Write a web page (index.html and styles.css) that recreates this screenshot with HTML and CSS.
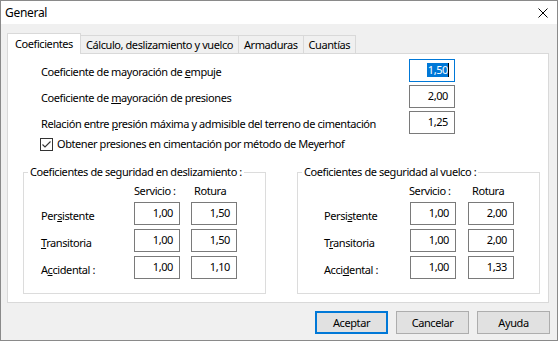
FILE: index.html
```html
<!DOCTYPE html>
<html>
<head>
<meta charset="utf-8">
<link rel="stylesheet" href="styles.css">
</head>
<body>
<div class="window">
  <div class="titlebar">
    <span class="title">General</span>
    <svg class="close" width="10" height="10" viewBox="0 0 10 10"><path d="M0.5 0.5 L9.5 9.5 M9.5 0.5 L0.5 9.5" stroke="#000" stroke-width="1" fill="none"/></svg>
  </div>
  <div class="client">
    <div class="tabs">
      <div class="tab active">Coeficientes</div>
      <div class="tab">Cálculo, deslizamiento y vuelco</div>
      <div class="tab">Armaduras</div>
      <div class="tab">Cuantías</div>
    </div>
    <div class="panel">
      <div class="row">
        <span class="rlabel">Coeficiente de mayoración de <u>e</u>mpuje</span>
        <div class="field focus"><span class="sel">1,50</span><span class="caret"></span></div>
      </div>
      <div class="row">
        <span class="rlabel">Coeficiente de <u>m</u>ayoración de presiones</span>
        <div class="field">2,00</div>
      </div>
      <div class="row">
        <span class="rlabel">Relación entre <u>p</u>resión máxima y admisible del terreno de cimentación</span>
        <div class="field">1,25</div>
      </div>
      <div class="check">
        <svg class="box" width="13" height="13" viewBox="0 0 13 13"><rect x="0.5" y="0.5" width="12" height="12" fill="#fff" stroke="#333"/><path d="M2.5 6.5 L5 9 L10.5 3.5" stroke="#333" stroke-width="1.1" fill="none"/></svg>
        <span>Obtener presiones en cimentación por método de Meyerhof</span>
      </div>
      <div class="groups">
        <fieldset class="group left">
          <legend>Coeficientes de seguridad en deslizamiento :</legend>
          <div class="grid">
            <span></span><span class="hd">Servicio :</span><span class="hd hd2">Rotura</span>
            <span class="glabel">Per<u>s</u>istente</span><div class="field">1,00</div><div class="field">1,50</div>
            <span class="glabel"><u>T</u>ransitoria</span><div class="field">1,00</div><div class="field">1,50</div>
            <span class="glabel">A<u>c</u>cidental :</span><div class="field">1,00</div><div class="field">1,10</div>
          </div>
        </fieldset>
        <fieldset class="group right">
          <legend>Coeficientes de seguridad al vuelco :</legend>
          <div class="grid">
            <span></span><span class="hd">Servicio :</span><span class="hd hd2">Rotura</span>
            <span class="glabel">Persi<u>s</u>tente</span><div class="field">1,00</div><div class="field">2,00</div>
            <span class="glabel">T<u>r</u>ansitoria</span><div class="field">1,00</div><div class="field">2,00</div>
            <span class="glabel">Acci<u>d</u>ental :</span><div class="field">1,00</div><div class="field">1,33</div>
          </div>
        </fieldset>
      </div>
    </div>
    <div class="footer">
      <div class="btn default">Aceptar</div>
      <div class="btn">Cancelar</div>
      <div class="btn">Ayuda</div>
    </div>
  </div>
</div>
</body>
</html>
```
FILE: styles.css
```css
* { box-sizing: border-box; }
html, body { margin: 0; padding: 0; background: #f0f0f0; }
.window {
  width: 558px; height: 341px;
  border: 1px solid #8a8a8a;
  display: flex; flex-direction: column;
  font-family: "Noto Sans", "Open Sans", sans-serif;
  font-size: 11px; color: #000;
  letter-spacing: -0.42px;
  line-height: 14px;
}
.titlebar {
  height: 23px; background: #fff;
  display: flex; align-items: center; justify-content: space-between;
  padding: 0 9px 0 4px;
  font-size: 12px; letter-spacing: -0.3px;
}
.close { display: block; }
.client {
  flex: 1; background: #f0f0f0;
  padding: 9px 8px 0 6px;
  display: flex; flex-direction: column;
}
.tabs { display: flex; align-items: flex-end; height: 20px; position: relative; z-index: 2; }
.tab {
  height: 18px; padding: 0 5px;
  border: 1px solid #d9d9d9; border-bottom: none;
  background: #f0f0f0;
  display: flex; align-items: center;
  margin-left: -1px;
}
.tab:first-child { margin-left: 0; }
.tab.active { height: 21px; margin-bottom: -1px; background: #fff; padding: 0 7px; }
.panel {
  width: 542px; height: 250px;
  background: #fff; border: 1px solid #d9d9d9;
  padding: 5px 0 0 33px;
  position: relative; z-index: 1;
}
.row { display: flex; align-items: center; height: 23px; margin-bottom: 3px; }
.rlabel { width: 368px; padding-top: 3px; }
.field {
  width: 46px; height: 23px;
  border: 1px solid #7a7a7a; background: #fff;
  text-align: right; padding: 3px 6px 0 0;
  line-height: 14px;
}
.field.focus { border-color: #0078d7; display: flex; justify-content: flex-end; align-items: flex-start; padding-right: 5px; }
.sel { background: #0078d7; color: #fff; padding: 0 0 0 1px; }
.caret { width: 1px; height: 14px; background: #000; }
.check { display: flex; align-items: center; height: 14px; margin-left: -1px; margin-top: 1px; }
.box { display: block; margin-right: 4px; }
.groups { display: flex; gap: 31px; margin: 13px 0 0 -18px; }
.group {
  margin: 0; width: 243px; height: 130px;
  border: 1px solid #dcdcdc;
  padding: 4px 0 0 17px;
  min-width: 0;
}
.group.right { padding-left: 26px; }
legend { padding: 0 2px; margin-left: -13px; line-height: 16px; }
.group.right legend { margin-left: -22px; }
.grid {
  display: grid;
  grid-template-columns: 82px 46px 46px;
  grid-template-rows: 14px 23px 23px 23px;
  column-gap: 11px; row-gap: 4px;
}
.group.right .grid { grid-template-columns: 74px 46px 46px; column-gap: 12px; }
.hd { padding-left: 0; }
.hd2 { padding-left: 3px; }
.group.right .hd { margin-left: -1px; }
.group.right .hd2 { margin-left: 0; padding-left: 4px; }
.glabel { align-self: center; padding-top: 5px; }
.footer { display: flex; justify-content: flex-end; gap: 8px; padding-top: 8px; margin-right: -1px; }
.btn {
  width: 73px; height: 23px;
  border: 1px solid #adadad; background: #e1e1e1;
  display: flex; align-items: center; justify-content: center;
}
.btn.default { border: 2px solid #0078d7; }
```
